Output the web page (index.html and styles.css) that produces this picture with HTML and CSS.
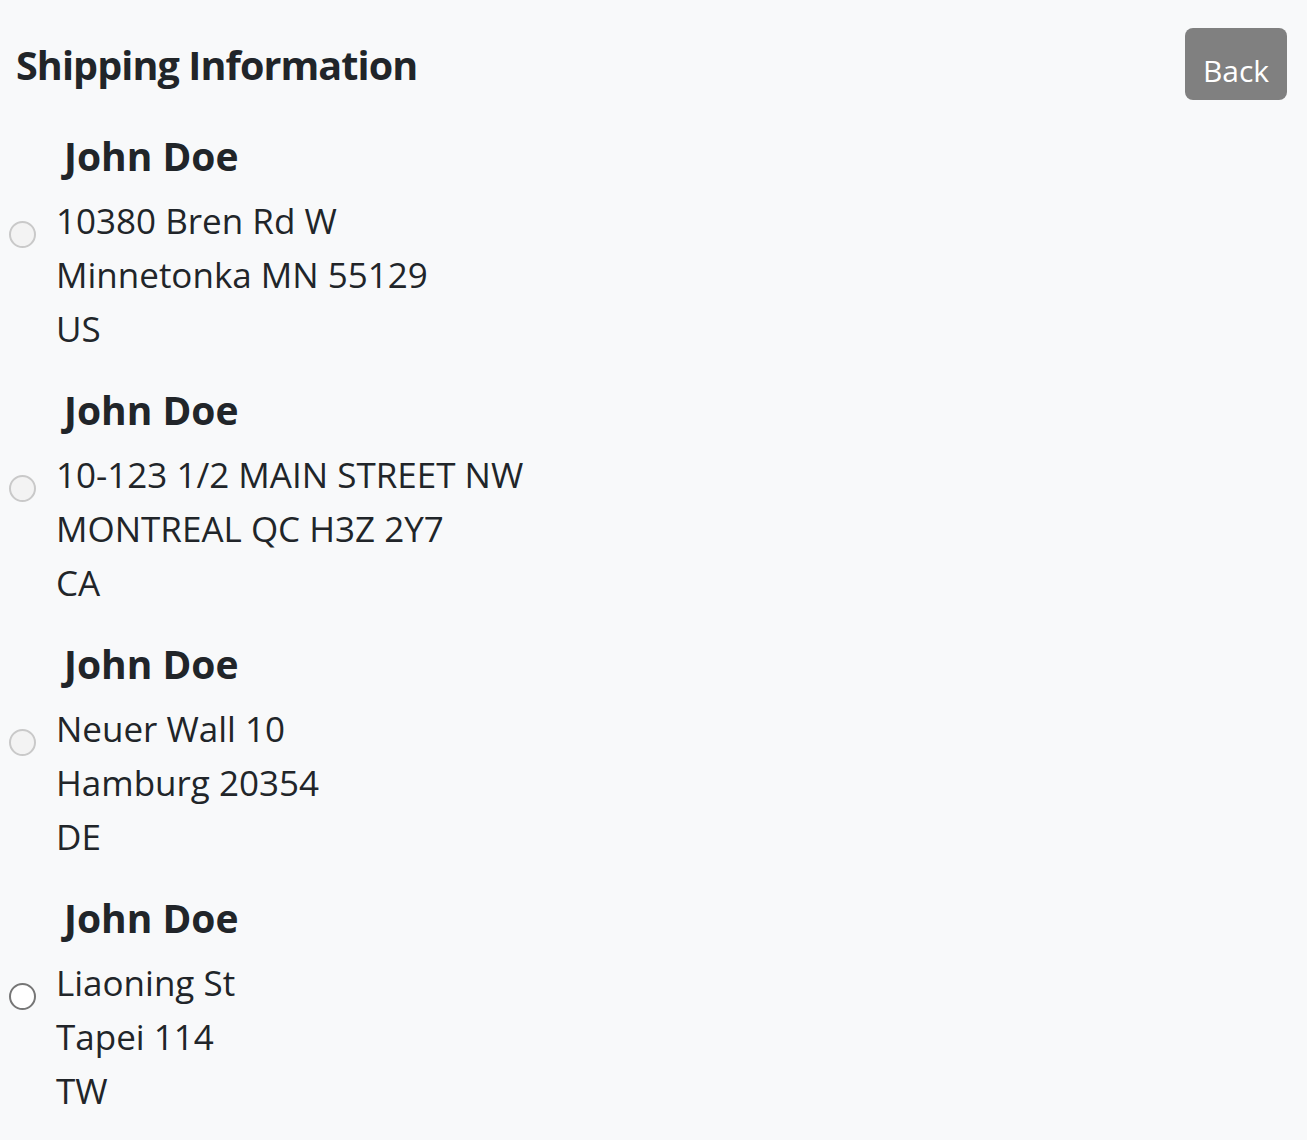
FILE: index.html
```html
<!DOCTYPE html>
<html lang="en">
<head>
<meta charset="utf-8">
<title>Shipping Information</title>
<link rel="stylesheet" href="styles.css">
</head>
<body>
<div class="page">
  <header class="header">
    <h1 class="title">Shipping Information</h1>
    <button class="btn-back" type="button">Back</button>
  </header>
  <div class="list">
    <div class="entry">
      <input class="radio" type="radio" name="addr" disabled>
      <div class="info">
        <div class="name">John Doe</div>
        <div class="line">10380 Bren Rd W</div>
        <div class="line">Minnetonka MN 55129</div>
        <div class="line">US</div>
      </div>
    </div>
    <div class="entry">
      <input class="radio" type="radio" name="addr" disabled>
      <div class="info">
        <div class="name">John Doe</div>
        <div class="line">10-123 1/2 MAIN STREET NW</div>
        <div class="line">MONTREAL QC H3Z 2Y7</div>
        <div class="line">CA</div>
      </div>
    </div>
    <div class="entry">
      <input class="radio" type="radio" name="addr" disabled>
      <div class="info">
        <div class="name">John Doe</div>
        <div class="line">Neuer Wall 10</div>
        <div class="line">Hamburg 20354</div>
        <div class="line">DE</div>
      </div>
    </div>
    <div class="entry">
      <input class="radio" type="radio" name="addr">
      <div class="info">
        <div class="name">John Doe</div>
        <div class="line">Liaoning St</div>
        <div class="line">Tapei 114</div>
        <div class="line">TW</div>
      </div>
    </div>
  </div>
</div>
</body>
</html>
```
FILE: styles.css
```css
html, body {
  margin: 0;
  padding: 0;
  background: #f8f9fa;
}
body {
  font-family: "Open Sans", "Noto Sans", sans-serif;
  color: #212529;
}
.page {
  padding: 28px 20px 0 0;
}
.header {
  display: flex;
  justify-content: space-between;
  align-items: flex-start;
}
.title {
  margin: 10px 0 0 16px;
  font-size: 39.5px;
  line-height: 54px;
  font-weight: 700;
  letter-spacing: -0.9px;
}
.btn-back {
  font-family: inherit;
  font-size: 30px;
  line-height: 40px;
  color: #fff;
  background: #808080;
  border: none;
  border-radius: 8px;
  width: 102px;
  height: 72px;
  padding: 14px 0 0 0;
  cursor: pointer;
}
.list {
  display: flex;
  flex-direction: column;
  gap: 30px;
  margin-top: 32px;
}
.entry {
  display: flex;
  align-items: flex-start;
}
.radio {
  appearance: none;
  -webkit-appearance: none;
  box-sizing: border-box;
  width: 27px;
  height: 27px;
  margin: 89px 0 0 9px;
  border-radius: 50%;
  border: 2px solid #767676;
  background: #fff;
  flex: none;
}
.radio:disabled {
  border-color: #c9c9c9;
  background: #f3f3f3;
}
.info {
  margin-left: 20px;
}
.name {
  font-size: 39px;
  line-height: 48px;
  font-weight: 700;
  padding-left: 8px;
  margin-bottom: 14px;
}
.line {
  font-size: 35px;
  line-height: 54px;
}
```
